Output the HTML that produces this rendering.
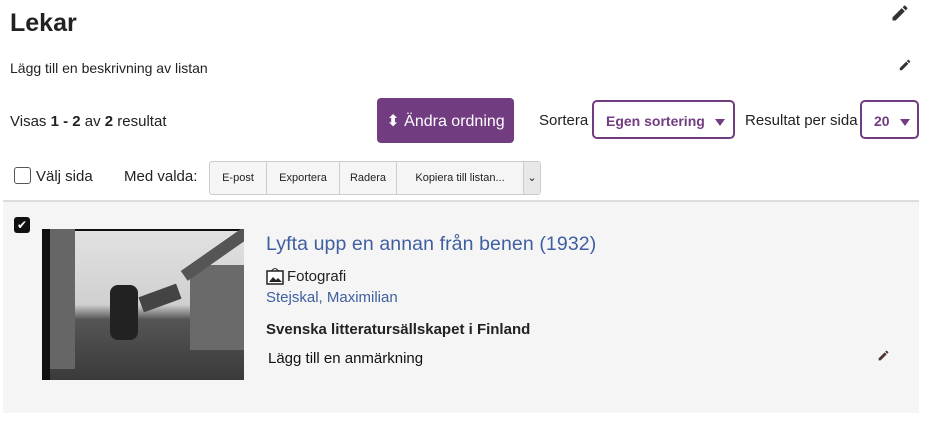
<!DOCTYPE html>
<html><head><meta charset="utf-8"><style>
body{margin:0;width:945px;height:421px;background:#fff;font-family:"Liberation Sans",sans-serif;color:#222;position:relative;overflow:hidden}
.a{position:absolute;white-space:nowrap}
h1{position:absolute;left:10px;top:9px;margin:0;font-size:25px;font-weight:bold;color:#222}
.btn{position:absolute;left:377px;top:98px;width:137px;height:45px;background:#723c81;border-radius:4px;color:#fff;font-size:16px;line-height:47px;text-align:center}
.sel{position:absolute;border:2px solid #723c81;border-radius:5px;color:#723c81;font-size:14px;font-weight:bold;box-sizing:border-box;height:39px;line-height:38px}
.tri{position:absolute;width:0;height:0;border-left:5px solid transparent;border-right:5px solid transparent;border-top:7px solid #723c81;top:17px}
.grp{position:absolute;left:209px;top:161px;height:32px;border:1px solid #ccc;border-radius:3px;display:flex;background:#f5f5f5;font-size:11px}
.grp div{border-right:1px solid #ccc;line-height:32px;text-align:center}
.panel{position:absolute;left:3px;top:200px;width:916px;height:211px;background:#f5f5f5;border-top:2px solid #ddd}
.ph{position:absolute;left:42px;top:229px;width:202px;height:151px;overflow:hidden;background:linear-gradient(#111 0,#111 2px,transparent 2px),linear-gradient(to bottom,#e2e2e2 0%,#d0d0d0 50%,#555 60%,#3a3a3a 100%)}
.ph div{position:absolute}
</style></head><body>
<h1>Lekar</h1>
<svg class="a" style="left:890px;top:3px" width="20" height="20" viewBox="0 0 24 24"><path d="M3 17.25V21h3.75L17.81 9.94l-3.75-3.75L3 17.25zM20.71 7.04a1 1 0 0 0 0-1.41l-2.34-2.34a1 1 0 0 0-1.41 0l-1.830 1.83 3.75 3.75 1.83-1.83z" fill="#333"/></svg>
<div class="a" style="left:10px;top:60px;font-size:14px">Lägg till en beskrivning av listan</div>
<svg class="a" style="left:898px;top:58px" width="14" height="14" viewBox="0 0 24 24"><path d="M3 17.25V21h3.75L17.81 9.94l-3.75-3.75L3 17.25zM20.71 7.04a1 1 0 0 0 0-1.41l-2.34-2.34a1 1 0 0 0-1.41 0l-1.83 1.83 3.75 3.75 1.83-1.83z" fill="#333"/></svg>
<div class="a" style="left:10px;top:113px;font-size:15px">Visas <b>1 - 2</b> av <b>2</b> resultat</div>
<div class="btn">⬍ Ändra ordning</div>
<div class="a" style="left:539px;top:112px;font-size:15px">Sortera</div>
<div class="sel" style="left:592px;top:100px;width:143px;padding-left:12px">Egen sortering<span class="tri" style="left:121px"></span></div>
<div class="a" style="left:745px;top:112px;font-size:15px">Resultat per sida</div>
<div class="sel" style="left:860px;top:100px;width:59px;padding-left:12px">20<span class="tri" style="left:38px"></span></div>
<div class="a" style="left:14px;top:167px;width:15px;height:15px;border:1px solid #555;border-radius:3px;background:#fff"></div>
<div class="a" style="left:36px;top:168px;font-size:15px">Välj sida</div>
<div class="a" style="left:124px;top:168px;font-size:15px">Med valda:</div>
<div class="grp"><div style="width:56px">E-post</div><div style="width:72px">Exportera</div><div style="width:56px">Radera</div><div style="width:126px">Kopiera till listan...</div><div style="width:16px;border:none;background:#e8e8e8">⌄</div></div>
<div class="panel"></div>
<div class="a" style="left:14px;top:217px;width:16px;height:16px;background:#111;border-radius:3px;color:#fff;font-size:12px;line-height:16px;text-align:center">✔</div>
<div class="ph">
<div style="left:0;top:0;width:8px;height:151px;background:#111"></div>
<div style="left:8px;top:0;width:25px;height:140px;background:#666"></div>
<div style="left:148px;top:36px;width:54px;height:85px;background:#6a6a6a"></div>
<div style="left:135px;top:18px;width:80px;height:12px;background:#555;transform:rotate(-35deg)"></div>
<div style="left:68px;top:56px;width:28px;height:55px;background:#222;border-radius:8px"></div>
<div style="left:98px;top:61px;width:40px;height:16px;background:#444;transform:rotate(-20deg)"></div>
</div>
<div class="a" style="left:266px;top:233px;font-size:19.5px;letter-spacing:0.1px;color:#3f5fa0">Lyfta upp en annan från benen (1932)</div>
<svg class="a" style="left:266px;top:268px" width="18" height="17" viewBox="0 0 18 17"><rect x="1" y="3" width="16" height="13" fill="#fff" stroke="#222" stroke-width="1.5"/><path d="M3 14l4-5 3 3 2-2 4 4z" fill="#222"/><path d="M5 3l4-3 4 3" fill="none" stroke="#222"/></svg>
<div class="a" style="left:287px;top:268px;font-size:15px">Fotografi</div>
<div class="a" style="left:266px;top:289px;font-size:15px;color:#3f5fa0">Stejskal, Maximilian</div>
<div class="a" style="left:266px;top:321px;font-size:15px;font-weight:bold">Svenska litteratursällskapet i Finland</div>
<div class="a" style="left:268px;top:350px;font-size:15px;color:#111">Lägg till en anmärkning</div>
<svg class="a" style="left:877px;top:349px" width="13" height="13" viewBox="0 0 24 24"><path d="M3 17.25V21h3.75L17.81 9.94l-3.75-3.75L3 17.25zM20.71 7.04a1 1 0 0 0 0-1.41l-2.34-2.34a1 1 0 0 0-1.41 0l-1.83 1.83 3.75 3.75 1.83-1.83z" fill="#553333"/></svg>
</body></html>
